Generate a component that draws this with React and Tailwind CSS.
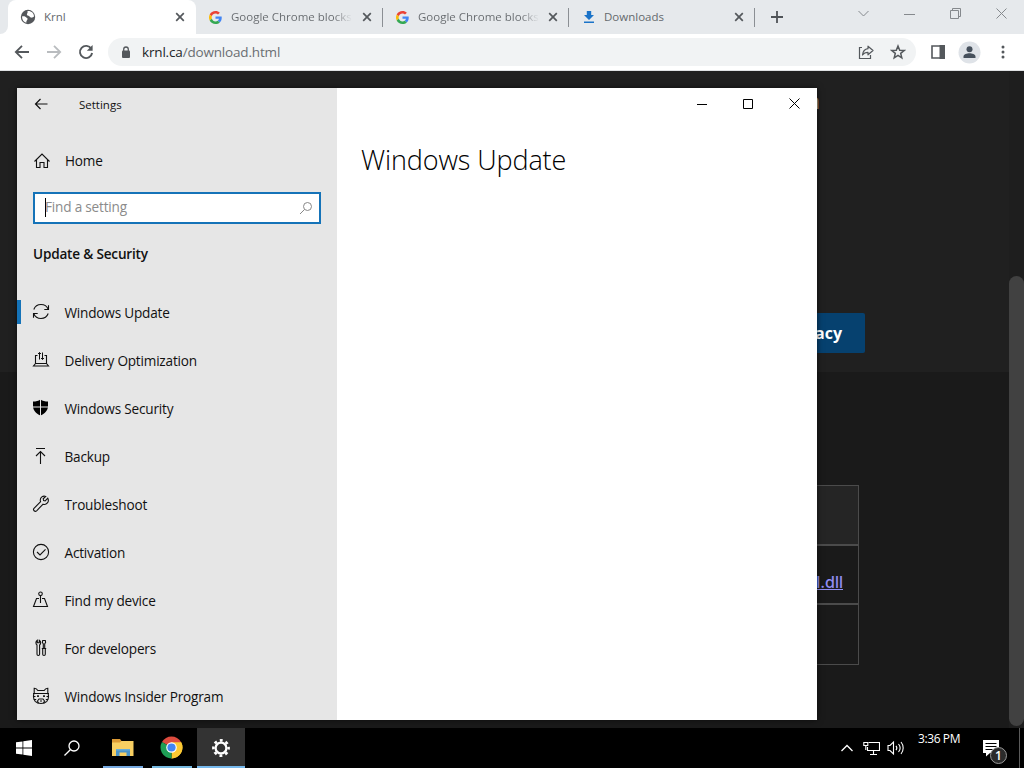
import React from 'react';
import clsx from 'clsx';

const GoogleIcon = () => (
  <svg width="13" height="13" viewBox="0 0 48 48">
    <path fill="#EA4335" d="M24 9.5c3.54 0 6.71 1.22 9.21 3.6l6.85-6.85C35.9 2.38 30.47 0 24 0 14.62 0 6.51 5.38 2.56 13.22l7.98 6.19C12.43 13.72 17.74 9.5 24 9.5z" />
    <path fill="#4285F4" d="M46.98 24.55c0-1.57-.15-3.09-.38-4.55H24v9.02h12.94c-.58 2.96-2.26 5.48-4.78 7.18l7.73 6c4.51-4.18 7.09-10.36 7.09-17.65z" />
    <path fill="#FBBC05" d="M10.53 28.59c-.48-1.45-.76-2.99-.76-4.59s.27-3.14.76-4.59l-7.98-6.19C.92 16.46 0 20.12 0 24s.92 7.54 2.56 10.78l7.97-6.19z" />
    <path fill="#34A853" d="M24 48c6.48 0 11.93-2.13 15.89-5.81l-7.73-6c-2.15 1.45-4.92 2.3-8.16 2.3-6.26 0-11.57-4.22-13.47-9.91l-7.98 6.19C6.51 42.62 14.62 48 24 48z" />
  </svg>
);

const GlobeIcon = () => (
  <svg width="16" height="16" viewBox="0 0 16 16">
    <circle cx="8" cy="8" r="7.2" fill="#54575b" />
    <path d="M2 7.4c1.6-.5 3.4-.2 4.1.9.5.9 1.6.7 1.5 1.8-.2 1.3-1.4 1.2-1.3 3.6C3.800 13 2 10.800 2 7.400zM7.400 2c1.800-.3 3.800.3 5 1.500 1.100 1.200 1.600 2.500 1.600 4-1 .6-1.700 1.500-3 1.100-1.300-.3-1.100-1.600-2.500-1.900C7 6.400 6.500 5.800 7.100 4.700c.4-.8.800-1.500.3-2.700z" fill="#fff" />
  </svg>
);

const DownloadIcon = () => (
  <svg width="12" height="14" viewBox="0 0 12 14" fill="#1a73c8">
    <path d="M3.800 1h4.400v4H11L6 10 1 5h2.800z" />
    <path d="M1 11.500h10V13H1z" />
  </svg>
);

const CloseX = () => (
  <svg width="10" height="10" viewBox="0 0 10 10" stroke="#54585c" strokeWidth="1.700">
    <path d="M1.200 1.200l7.600 7.600M8.800 1.200l-7.600 7.600" />
  </svg>
);

const tabs = [
  { title: 'Google Chrome blocks', icon: <GoogleIcon />, fade: true },
  { title: 'Google Chrome blocks', icon: <GoogleIcon />, fade: true },
  { title: 'Downloads', icon: <DownloadIcon /> },
];

const TabStrip = () => (
  <div className="flex h-[34px] bg-[#e6e9ec] text-[11.500px] text-[#65696d]">
    <div className="w-2 bg-white">
      <div className="h-full rounded-br-lg bg-[#e6e9ec]" />
    </div>
    <div className="flex w-[188px] items-center rounded-t-lg bg-white pl-[12px] pr-[11px]">
      <GlobeIcon />
      <span className="ml-2 flex-1">Krnl</span>
      <CloseX />
    </div>
    {tabs.map((tab, i) => (
      <div
        key={i}
        className={clsx(
          'flex h-[34px] items-center pl-[12px] pr-[10px]',
          i === 0 ? 'w-[187px]' : 'w-[186px]'
        )}
      >
        <span className="flex w-[15px] shrink-0 justify-center">{tab.icon}</span>
        <span
          className={clsx(
            'ml-2 w-[121px] overflow-hidden whitespace-nowrap',
            tab.fade && 'bg-linear-to-r from-[#65696d] from-85% to-transparent bg-clip-text text-transparent'
          )}
        >
          {tab.title}
        </span>
        <span className="ml-auto"><CloseX /></span>
        <span className="-mr-[10px] ml-[10px] h-[19px] w-px bg-[#8b8f94]" />
      </div>
    ))}
    <div className="flex w-[44px] items-center justify-center">
      <svg width="12" height="12" viewBox="0 0 12 12" stroke="#4f5357" strokeWidth="1.800">
        <path d="M6 0v12M0 6h12" />
      </svg>
    </div>
    <div className="ml-auto flex h-7 text-[#85898d]">
      <WindowButton><path d="M.5 3l5 5 5-5" /></WindowButton>
      <WindowButton><path d="M0 6.500h11" /></WindowButton>
      <WindowButton><path d="M.5 2.500h8v8h-8zM2.500 2.500v-2h8v8h-2" /></WindowButton>
      <WindowButton><path d="M.5.5l10 10M10.500.5l-10 10" /></WindowButton>
    </div>
  </div>
);

const WindowButton = ({ children }) => (
  <div className="flex w-[46px] items-center justify-center pb-px pl-px">
    <svg width="11" height="11" viewBox="0 0 11 11" fill="none" stroke="currentColor">
      {children}
    </svg>
  </div>
);

const Toolbar = () => (
  <div className="flex h-[37px] items-center border-b border-[#dfe1e3] bg-white pl-[14px] text-[#54585c]">
    <svg width="16" height="16" viewBox="0 0 16 16" fill="none" stroke="currentColor" strokeWidth="1.800">
      <path d="M15 8H2M8 1.800L1.800 8 8 14.200" />
    </svg>
    <svg className="ml-4" width="16" height="16" viewBox="0 0 16 16" fill="none" stroke="#b9bcbf" strokeWidth="1.800">
      <path d="M1 8h13M8 1.800L14.200 8 8 14.200" />
    </svg>
    <svg className="ml-4" width="16" height="16" viewBox="0 0 16 16" fill="none" stroke="currentColor" strokeWidth="1.900">
      <path d="M13.300 4.800A6.100 6.100 0 1 0 14.100 9" />
      <path d="M14.600 1v5.800H8.800z" fill="currentColor" stroke="none" />
    </svg>
    <div className="ml-[14px] flex h-7 w-[808px] items-center rounded-full bg-[#f1f3f4] pl-[13px] pr-[10px]">
      <svg width="10" height="13" viewBox="0 0 10 13">
        <rect x="1" y="4.500" width="8" height="7.500" rx="1" fill="#54585c" />
        <path d="M2.700 5V3.300a2.300 2.300 0 0 1 4.600 0V5" fill="none" stroke="#54585c" strokeWidth="1.300" />
      </svg>
      <span className="ml-[11px] text-[13.500px] tracking-[-0.170px] text-[#6a6e72]">
        <span className="text-[#222427]">krnl.ca</span>/download.html
      </span>
      <svg className="ml-auto" width="16" height="16" viewBox="0 0 16 16" fill="none" stroke="currentColor" strokeWidth="1.200">
        <path d="M4 3.500H1.500v11h11V11" />
        <path d="M10 2.200l5 4.300-5 4.300V8.300C7.300 8.300 5.700 9.200 4.500 11c.4-3.300 2-5.800 5.500-6.300z" strokeLinejoin="round" />
      </svg>
      <svg className="ml-4" width="16" height="16" viewBox="0 0 16 16" fill="none" stroke="currentColor" strokeWidth="1.500">
        <path d="M8 2l1.700 4.200 4.500.3-3.500 2.900 1.100 4.400L8 11.400l-3.800 2.400 1.100-4.400L1.800 6.500l4.500-.3z" />
      </svg>
    </div>
    <svg className="ml-[15px]" width="15" height="14" viewBox="0 0 15 14">
      <path d="M1 1h12v12H1z" fill="none" stroke="#54585c" strokeWidth="1.600" />
      <path d="M8.500 0H14v14H8.500z" fill="#54585c" />
    </svg>
    <svg className="ml-[12px]" width="23" height="23" viewBox="0 0 23 23">
      <circle cx="11.500" cy="11.500" r="11" fill="#dfe3e8" />
      <circle cx="11.500" cy="8.300" r="3" fill="#46505c" />
      <path d="M5.500 17v-1.500c0-2.300 3.500-3.300 6-3.300s6 1 6 3.300V17z" fill="#46505c" />
    </svg>
    <svg className="ml-[19.500px]" width="4" height="14" viewBox="0 0 4 14" fill="#54585c">
      <circle cx="2" cy="2" r="1.500" />
      <circle cx="2" cy="7" r="1.500" />
      <circle cx="2" cy="12" r="1.500" />
    </svg>
  </div>
);

const WebPage = () => (
  <div className="flex h-[657px] bg-[#1a1a1a]">
    <div className="flex-1">
      <div className="h-[301px] bg-[#202020]">
        <div className="flex h-[242px] w-[820px] justify-end pt-[13px] text-[22px] font-bold text-[#a29a86]">n</div>
        <div className="flex w-[865px] justify-end">
          <div className="flex h-10 items-center rounded-[2px] bg-[#06416f] px-[23px] text-[16px] font-bold text-white">
            Privacy
          </div>
        </div>
      </div>
      <div className="ml-[160px] mt-[113px] w-[699px] border border-[#4b4b4b] text-right">
        <div className="h-[58px] bg-[#252525]" />
        <div className="flex h-[61px] items-center justify-end border-y-2 border-[#4b4b4b] pr-[15px] pt-[14px] font-['Inter'] text-[16px] font-medium text-[#918df2] underline">
          krnl.dll
        </div>
        <div className="h-[59px]" />
      </div>
    </div>
    <div className="w-[15px] bg-[#1e1e1e] pt-[205px]">
      <div className="h-[450px] rounded-full bg-[#414141]" />
    </div>
  </div>
);

const NavIcon = ({ children }) => (
  <svg className="shrink-0" width="18" height="18" viewBox="0 0 18 18" fill="none" stroke="#111" strokeWidth="1.100">
    {children}
  </svg>
);

const navItems = [
  {
    label: 'Windows Update',
    active: true,
    icon: (
      <>
        <path d="M1.800 6.500C3 3.300 5.700 1.500 9 1.500c3.200 0 6 1.800 7.200 4.800M16.500 2.300v4.200h-4.200" />
        <path d="M16.200 10.500c-1.200 3.200-3.900 5-7.200 5-3.200 0-6-1.800-7.200-4.800M1.500 14.700v-4.200h4.200" />
      </>
    ),
  },
  {
    label: 'Delivery Optimization',
    icon: (
      <>
        <path d="M5.500 4.500h-2v8h11v-8h-2M3.500 12.500l-2 2.500h15l-2-2.500" />
        <path d="M7.500 8.500v-7M6 3l1.500-1.500L9 3M10.500 1.500v7M9 7l1.500 1.500L12 7" strokeWidth="1" />
      </>
    ),
  },
  {
    label: 'Windows Security',
    icon: (
      <>
        <path d="M8.500.5c2 1.400 4.500 2 7.500 2V7c0 4.200-2.800 7.300-7.500 9.500C3.800 14.300 1 11.200 1 7V2.500c3 0 5.500-.6 7.500-2z" fill="#000" stroke="none" />
        <path d="M8.500 0v17M1 8h16" stroke="#e6e6e6" strokeWidth="1" />
      </>
    ),
  },
  { label: 'Backup', icon: <path d="M4 1.500h9M8.500 17V4.500M4 9l4.500-4.500L13 9" /> },
  {
    label: 'Troubleshoot',
    icon: (
      <path d="M15.800 3.200l-2.600 2.600-1.600-.3-.4-1.700 2.500-2.400c-2.800-1-5.700 1-5.400 4 .1.500.1.900.3 1.300L2 13.300c-1.500 1.700.9 4 2.600 2.500l6.500-6.600c3.400 1.100 6.500-2.400 4.700-6z" />
    ),
  },
  {
    label: 'Activation',
    icon: (
      <>
        <circle cx="9" cy="9" r="7.600" />
        <path d="M5 9l3 3 5.500-5.700" />
      </>
    ),
  },
  {
    label: 'Find my device',
    icon: (
      <>
        <circle cx="8.500" cy="2.800" r="1.800" />
        <path d="M8.500 4.600V12M7 7.500H4.500l-3 8h14l-3-8H10" />
      </>
    ),
  },
  {
    label: 'For developers',
    icon: (
      <>
        <path d="M5.300 1.200v2.600h2V1.200c1.800 1.100 1.800 3.800.3 4.800v9.200c0 1.700-2.600 1.700-2.600 0V6c-1.500-1-1.500-3.700.3-4.800z" />
        <path d="M10.700 1.500h2.600l.3 2-.9 1.500v4.500h-1.400V5l-.9-1.500zM9.800 9.500h4.400M10.700 9.500v5.700c0 1.700 2.600 1.700 2.600 0V9.500" />
      </>
    ),
  },
  {
    label: 'Windows Insider Program',
    icon: (
      <>
        <path d="M2.200 6.500V1.300c1.700.2 2.900 1 3.600 2.200h6.400c.7-1.200 1.900-2 3.600-2.200v5.200M1 6.500h16" />
        <path d="M1.900 6.500c-.8 3-.5 5.800 1.300 7.800C4.800 16 6.800 16.500 9 16.500s4.200-.5 5.800-2.200c1.800-2 2.100-4.800 1.300-7.800" />
        <path d="M1.300 9.500h2.200M1.800 12.500h2.400M14.500 9.500h2.200M13.800 12.500h2.400M6.500 16.300L5.500 14l1.500-2h4l1.500 2-1 2.300M8 14h2" />
        <path d="M6 8.200v1.900M12 8.200v1.900" strokeWidth="1.800" />
      </>
    ),
  },
];

const Sidebar = () => (
  <div className="w-[320px] overflow-hidden bg-[#e6e6e6]">
    <div className="flex h-8 items-center pl-[17px]">
      <svg width="14" height="12" viewBox="0 0 14 12" fill="none" stroke="#111" strokeWidth="1.200">
        <path d="M13.500 6H1.500M6.500 1l-5 5 5 5" />
      </svg>
      <span className="ml-[31px] pt-[2px] text-[11.500px] tracking-normal">Settings</span>
    </div>
    <div className="mt-[17px] flex h-12 items-center pl-4">
      <NavIcon>
        <path d="M1.500 9.500L9 2l7.500 7.500M3.500 8v7.500H7v-5h4v5h3.500V8" />
      </NavIcon>
      <span className="ml-[14px]">Home</span>
    </div>
    <div className="mx-4 mt-[7px] flex h-8 items-center border-2 border-[#1573b8] bg-white pl-[10px] pr-[6px]">
      <span className="mb-[2px] h-[19px] w-px bg-black" />
      <span className="-ml-px mb-px text-[#8b8b8b]">Find a setting</span>
      <svg className="ml-auto" width="14" height="14" viewBox="0 0 14 14" fill="none" stroke="#888">
        <circle cx="8.500" cy="5.500" r="4" />
        <path d="M5.500 8.500L1 13" />
      </svg>
    </div>
    <div className="mt-[14px] flex h-8 items-center pl-4 font-semibold">Update &amp; Security</div>
    <div className="mt-[19px]">
      {navItems.map((item) => (
        <div key={item.label} className="flex h-12 items-center">
          <span className={clsx('mb-[2px] h-6 w-1', item.active && 'bg-[#1573b8]')} />
          <span className="mb-[2px] ml-[11px]"><NavIcon>{item.icon}</NavIcon></span>
          <span className="ml-[14.500px]">{item.label}</span>
        </div>
      ))}
    </div>
  </div>
);

const SettingsWindow = () => (
  <div className="absolute left-[17px] top-[88px] flex h-[632px] w-[800px] overflow-hidden bg-white text-[13.600px] tracking-[-0.200px] text-[#111] shadow-[0_0_6px_rgba(0,0,0,0.6)]">
    <Sidebar />
    <div className="flex-1">
      <div className="flex h-8 justify-end text-black">
        <WindowButton><path d="M0 6.500h10" /></WindowButton>
        <WindowButton><path d="M.5 1.500h9v9h-9z" /></WindowButton>
        <WindowButton><path d="M.5.5l10 10M10.500.5l-10 10" /></WindowButton>
      </div>
      <h1 className="mt-[20px] pl-[24px] text-[27px] font-light leading-10 tracking-[-0.120px] text-black">Windows Update</h1>
    </div>
  </div>
);

const ChromeIcon = () => (
  <svg width="23" height="23" viewBox="0 0 48 48">
    <path d="M24 24L4.100 12.500A23 23 0 0 1 43.900 12.500z" fill="#dd4b3e" />
    <path d="M24 24L43.900 12.500A23 23 0 0 1 24 47z" fill="#fcc934" />
    <path d="M24 24L24 47A23 23 0 0 1 4.100 12.500z" fill="#1e9e56" />
    <path d="M24 13h20.100A23 23 0 0 1 24 47l9.500-17.500z" fill="#fcc934" />
    <circle cx="24" cy="24" r="11" fill="#fff" />
    <circle cx="24" cy="24" r="8.600" fill="#4285f4" />
  </svg>
);

const ExplorerIcon = () => (
  <svg width="22" height="20" viewBox="0 0 22 20">
    <path d="M0 1h8l1.500 2H20v3H0z" fill="#dc9a35" />
    <path d="M0 4.500h8L9.500 3H21.500v15H0z" fill="#f8cf62" />
    <path d="M4 18v-7h14v7h-3.500v-3.500h-7V18z" fill="#4b94c8" />
    <path d="M4 11h14v1.500H4z" fill="#68add8" />
  </svg>
);

const Taskbar = () => (
  <div className="flex h-10 bg-black text-white">
    <div className="flex w-12 items-center justify-center">
      <svg width="16" height="16" viewBox="0 0 16 16" fill="#fff">
        <path d="M0 2.300L6.500 1.400v6.200H0zM7.300 1.300L16 0v7.600H7.300zM0 8.400h6.500v6.200L0 13.700zM7.300 8.400H16V16l-8.700-1.300z" />
      </svg>
    </div>
    <div className="flex w-12 items-center justify-center">
      <svg width="16" height="16" viewBox="0 0 16 16" fill="none" stroke="#fff" strokeWidth="1.300">
        <circle cx="10" cy="6" r="5" />
        <path d="M6.300 9.700L.5 15.500" />
      </svg>
    </div>
    <div className="ml-[7px] flex w-10 items-center justify-center border-b-2 border-[#76a9e0] pt-[2px]">
      <ExplorerIcon />
    </div>
    <div className="ml-[9px] flex w-10 items-center justify-center border-b-2 border-[#76b9e0] pt-px pr-px">
      <ChromeIcon />
    </div>
    <div className="ml-[5px] flex w-12 items-center justify-center border-b-2 border-[#76b9ed] bg-[#333] pt-[2px]">
      <svg width="18" height="18" viewBox="0 0 18 18" fill="none" stroke="#fff">
        <circle cx="9" cy="9" r="5.400" strokeWidth="2.300" />
        <circle cx="9" cy="9" r="7.600" strokeWidth="2.600" strokeDasharray="2.900 3.069" strokeDashoffset="1.450" />
      </svg>
    </div>
    <div className="ml-auto flex">
      <svg className="mt-[16px]" width="12" height="8" viewBox="0 0 12 8" fill="none" stroke="#fff" strokeWidth="1.300">
        <path d="M.5 7L6 1.500 11.500 7" />
      </svg>
      <svg className="ml-[10px] mt-[13px]" width="17" height="15" viewBox="0 0 17 15" fill="none" stroke="#fff" strokeWidth="1.100">
        <path d="M5.500 1.500h11v8H4.500V6M10.500 10v3.500M7 13.500h7" />
        <path d="M.8 1.500h4v3h-4zM2.800 4.500V9" />
      </svg>
      <svg className="ml-[7px] mt-[12px]" width="18" height="16" viewBox="0 0 18 16" fill="none" stroke="#fff" strokeWidth="1.100">
        <path d="M1 5.500h2L6.500 2v12L3 10.500H1z" />
        <path d="M9 5.800c1 1.300 1 3.100 0 4.400M11.500 4c1.900 2.300 1.900 5.700 0 8M14 2c2.900 3.500 2.900 8.500 0 12" />
      </svg>
      <span className="ml-[13px] w-[64px] whitespace-nowrap pt-[2px] text-[12px] leading-[18px] tracking-[-0.400px]">3:36 PM</span>
      <div className="relative mt-[12px] h-6 w-[37px]">
        <svg width="17" height="17" viewBox="0 0 17 17">
          <path d="M1 0h16v13H8l-4 3.500V13H1z" fill="#fff" />
          <path d="M3.500 3.500h11M3.500 6.500h11M3.500 9.500h7" stroke="#000" />
        </svg>
        <span className="absolute left-[8px] top-[7px] flex size-[17px] items-center justify-center rounded-full border border-[#999] bg-[#2b2b2b] text-[12px] font-semibold">
          1
        </span>
      </div>
      <div className="mr-1 w-px bg-[#5a5a5a]" />
    </div>
  </div>
);

export default function App() {
  return (
    <div className="relative h-[768px] w-[1024px] overflow-hidden bg-black font-['Open_Sans','Noto_Sans',sans-serif]">
      <TabStrip />
      <Toolbar />
      <WebPage />
      <Taskbar />
      <SettingsWindow />
    </div>
  );
}
